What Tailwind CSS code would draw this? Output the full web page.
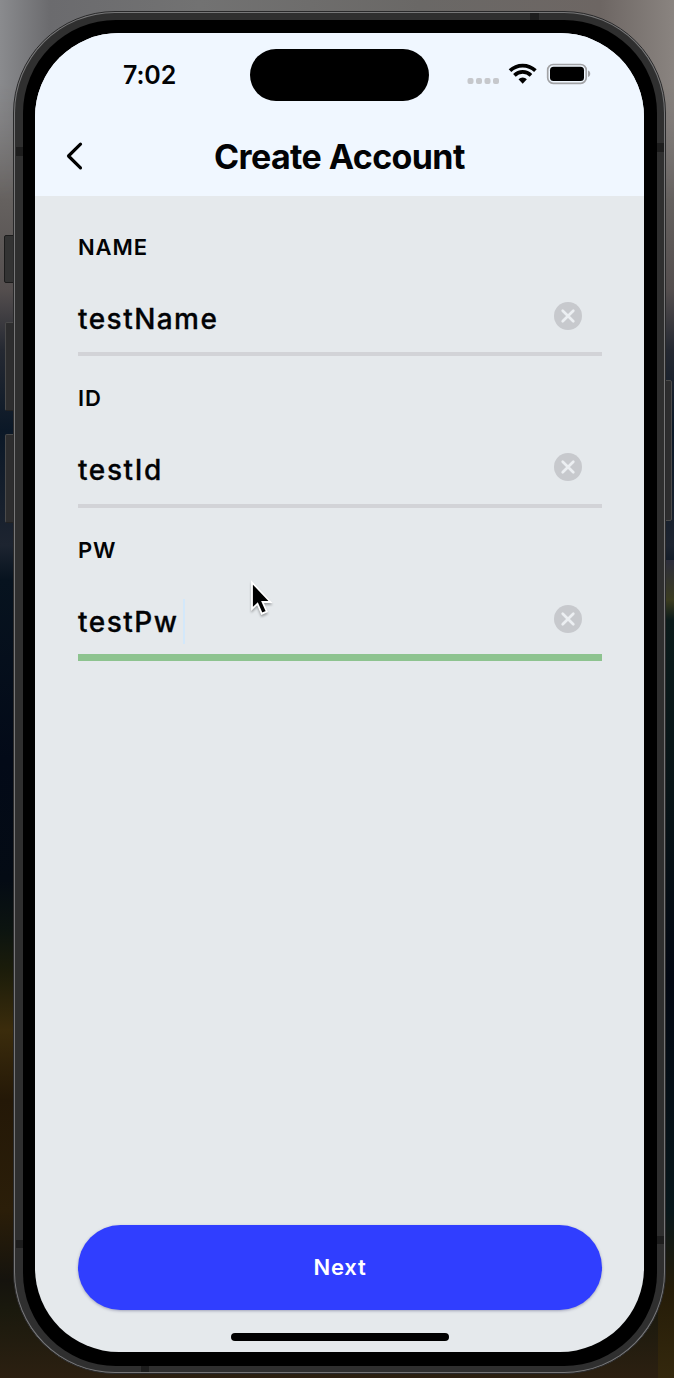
<!DOCTYPE html>
<html lang="en">
<head>
<meta charset="utf-8">
<meta name="viewport" content="width=device-width, initial-scale=1">
<title>Create Account</title>
<script src="https://cdn.jsdelivr.net/npm/@tailwindcss/browser@4"></script>
</head>
<body class="overflow-hidden font-['Inter',sans-serif] text-[#020305]">
<div class="relative h-[1378px] w-[674px] overflow-hidden bg-[linear-gradient(to_bottom,#6b6b6d_0px,#716e6d_120px,#65615f_200px,#544e4e_290px,#252932_350px,#0b1827_430px,#1d2430_545px,#07131f_580px,#030a18_760px,#040b14_880px,#0c1410_930px,#1b1c0a_970px,#3b2c0c_1030px,#241807_1100px,#2b1e09_1210px,#15130d_1280px,#1a190d_1310px,#2c2011_1378px)]">
  <!-- Desktop wallpaper -->
  <div class="absolute inset-x-0 top-0 h-[200px] bg-[linear-gradient(to_right,#8a8b8e_0px,#6b6b6e_50px,#727272_200px,#6a6866_420px,#6d6663_600px,#8a8480_674px)] mask-[linear-gradient(to_bottom,black_40%,transparent)]"></div>
  <div class="absolute right-0 top-[560px] h-[818px] w-[16px] bg-[linear-gradient(to_bottom,#2d2e3c_0px,#3b3c20_40px,#0b1b1b_60px,#081417_230px,#020712_420px,#08171b_650px,#251c08_730px,#34280d_818px)]"></div>

  <!-- Hardware buttons -->
  <div class="absolute left-[4px] top-[235px] h-[48px] w-[12px] rounded-l-[2px] border border-[#1c1c1c] bg-[#333]"></div>
  <div class="absolute left-[5px] top-[322px] h-[89px] w-[11px] rounded-l-[2px] border border-[#4a4a4a] border-b-[#222] bg-[#2d2d2e]"></div>
  <div class="absolute left-[5px] top-[434px] h-[89px] w-[11px] rounded-l-[2px] border border-[#4a4a4a] border-b-[#222] bg-[#2d2d2e]"></div>
  <div class="absolute left-[662px] top-[380px] h-[141px] w-[10px] rounded-r-[2px] border border-[#4a4a4a] bg-[#2d2d2e]"></div>

  <!-- Phone -->
  <div class="absolute left-[13px] top-[11px] h-[1363px] w-[653px] rounded-[102px] border border-[#29292a] bg-[#777778] p-px">
    <div class="h-full w-full rounded-[100px] bg-[#2f2f2f] pt-[7px] pr-[7px] pb-[6px] pl-[8px]">
      <div class="h-full w-full rounded-[93px] bg-black pt-[13px] pr-[13px] pb-[14px] pl-[12px]">
        <main class="flex h-full w-full flex-col overflow-hidden rounded-[84px] bg-[#e5e9ec]">
          <header class="flex h-[163px] shrink-0 flex-col bg-[#f0f7ff]">
            <div class="flex h-[84px] items-start">
              <div class="w-[215px] pl-[88px] pt-[25px] text-[25px] font-semibold leading-[34px] tracking-[-0.1px]">7:02</div>
              <div class="mt-[16px] h-[52px] w-[179px] shrink-0 rounded-full bg-black"></div>
              <svg class="ml-[36px] mt-[26px] shrink-0" width="128" height="30" viewBox="0 0 128 30">
                <g fill="#c6c8cc"><rect x="2.500" y="19" width="6" height="6" rx="2"/><rect x="11" y="19" width="6" height="6" rx="2"/><rect x="19.500" y="19" width="6" height="6" rx="2"/><rect x="28" y="19" width="6" height="6" rx="2"/></g>
                <g fill="none" stroke="#000" stroke-width="3.700"><path d="M45 11.700a18.200 18.200 0 0 1 25.400 0"/><path d="M49.400 16.300a12 12 0 0 1 16.600 0"/></g>
                <path d="M57.700 24.700l-4.200-4.400a6 6 0 0 1 8.400 0z"/>
                <rect x="82.700" y="5.500" width="38.500" height="18.800" rx="5.500" fill="none" stroke="#a2a3a6" stroke-width="1.700"/>
                <rect x="85" y="7.800" width="34" height="14.200" rx="3.500"/>
                <path d="M123 11.500c3 .8 3 5.700 0 6.500z" fill="#a2a3a6"/>
              </svg>
            </div>
            <div class="flex h-[79px] items-center pl-[28px]">
              <svg class="-mt-[2px]" width="24" height="32" viewBox="0 0 24 32" fill="none" stroke="#000" stroke-width="3.200" stroke-linecap="round" stroke-linejoin="round"><path d="M17.500 4.200L5.500 16L17.500 27.800"/></svg>
              <h1 class="ml-[127px] whitespace-nowrap text-[34px] font-bold leading-[40px] tracking-[-0.6px]">Create Account</h1>
            </div>
          </header>
          <form class="flex flex-1 flex-col pr-[42px] pl-[43px] pt-[36px]">
            <label class="flex h-[151px] flex-col">
              <span class="text-[22px] font-semibold leading-[30px] tracking-[0.9px]">NAME</span>
              <span class="mt-[35px] flex h-[59px] justify-between border-b-4 border-[#d2d3d7] pr-[19px]">
                <span class="pt-[4px] text-[28px] font-medium leading-[36px] tracking-[1.45px] [-webkit-text-stroke:0.3px_#020305]">testName</span>
                <svg class="mt-[4px]" width="30" height="30" viewBox="0 0 30 30"><circle cx="15" cy="15" r="14" fill="#c7c9cd"/><path d="M9.700 9.700L20.300 20.300M20.300 9.700L9.700 20.300" stroke="#eceff2" stroke-width="2.700" stroke-linecap="round"/></svg>
              </span>
            </label>
            <label class="flex h-[152px] flex-col">
              <span class="text-[22px] font-semibold leading-[30px] tracking-[0.9px]">ID</span>
              <span class="mt-[35px] flex h-[60px] justify-between border-b-4 border-[#d2d3d7] pr-[19px]">
                <span class="pt-[4px] text-[28px] font-medium leading-[36px] tracking-[1.6px] [-webkit-text-stroke:0.3px_#020305]">testId</span>
                <svg class="mt-[4px]" width="30" height="30" viewBox="0 0 30 30"><circle cx="15" cy="15" r="14" fill="#c7c9cd"/><path d="M9.700 9.700L20.300 20.300M20.300 9.700L9.700 20.300" stroke="#eceff2" stroke-width="2.700" stroke-linecap="round"/></svg>
              </span>
            </label>
            <label class="flex flex-col">
              <span class="text-[22px] font-semibold leading-[30px] tracking-[0.9px]">PW</span>
              <span class="mt-[35px] flex h-[61px] justify-between border-b-7 border-[#8dc38f] pr-[19px]">
                <span class="flex pt-[4px] text-[28px] font-medium leading-[36px] tracking-[1.5px] [-webkit-text-stroke:0.3px_#020305]">testPw<span class="-mt-[5px] ml-[4px] h-[45px] w-[2px] bg-[#d3e8fa]"></span></span>
                <svg class="mt-[4px]" width="30" height="30" viewBox="0 0 30 30"><circle cx="15" cy="15" r="14" fill="#c7c9cd"/><path d="M9.700 9.700L20.300 20.300M20.300 9.700L9.700 20.300" stroke="#eceff2" stroke-width="2.700" stroke-linecap="round"/></svg>
              </span>
            </label>
            <button type="button" class="mt-auto h-[85px] w-full rounded-full bg-[#303eff] text-[22px] font-semibold tracking-[0.8px] text-white shadow-[0_1px_3px_rgba(60,60,110,0.4)]">Next</button>
            <div class="mx-auto mb-[11px] mt-[23px] h-[8px] w-[218px] shrink-0 rounded-full bg-black"></div>
          </form>
        </main>
      </div>
    </div>
  </div>

  <!-- Antenna bands -->
  <div class="absolute left-[16px] top-[147px] h-[9px] w-[7px] bg-[#1d1d1d]"></div>
  <div class="absolute left-[657px] top-[143px] h-[9px] w-[7px] bg-[#1d1d1d]"></div>
  <div class="absolute left-[530px] top-[13px] h-[7px] w-[9px] bg-[#1d1d1d]"></div>
  <div class="absolute left-[16px] top-[1240px] h-[8px] w-[7px] bg-[#1d1d1d]"></div>
  <div class="absolute left-[657px] top-[1236px] h-[8px] w-[7px] bg-[#1d1d1d]"></div>
  <div class="absolute left-[141px] top-[1366px] h-[6px] w-[8px] bg-[#1d1d1d]"></div>

  <!-- Pointer -->
  <svg class="absolute left-[248px] top-[578px] drop-shadow-[0_2px_1px_rgba(0,0,0,0.3)]" width="28" height="40" viewBox="0 0 28 40"><path d="M4 4.500V31l5.500-5.300 4.300 10 5-2.100-4.300-9.600h8z" fill="#000" stroke="#fff" stroke-width="1.800"/></svg>
</div>
</body>
</html>
